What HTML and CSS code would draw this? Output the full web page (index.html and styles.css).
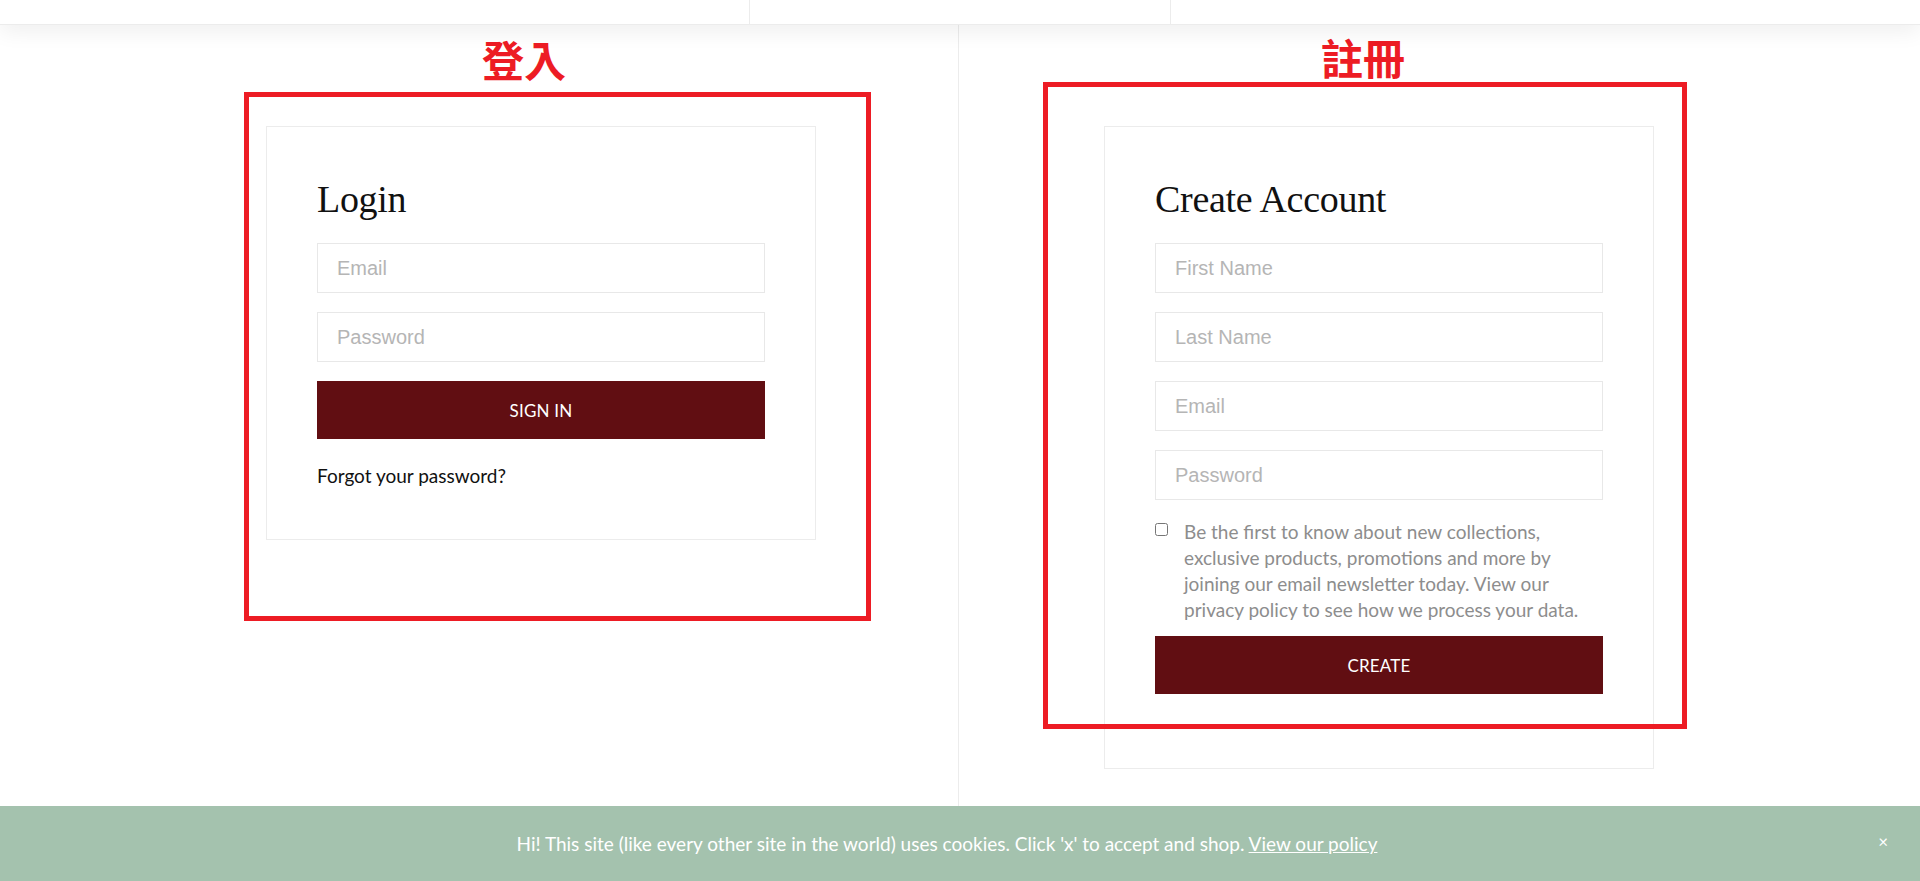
FILE: index.html
```html
<!DOCTYPE html>
<html lang="en">
<head>
    <meta charset="UTF-8">
    <meta name="viewport" content="width=device-width, initial-scale=1.0">
    <title>Account</title>
    <link rel="stylesheet" href="styles.css">
</head>
<body>
    <header class="topbar">
        <div class="topbar-cell topbar-left"></div>
        <div class="topbar-cell topbar-mid"></div>
        <div class="topbar-cell topbar-right"></div>
    </header>

    <main class="account">
        <section class="account-col col-login">
            <div class="card">
                <h1 class="card-title">Login</h1>
                <form class="form">
                    <input class="field" type="email" placeholder="Email">
                    <input class="field" type="password" placeholder="Password">
                    <button class="btn" type="button">SIGN IN</button>
                </form>
                <a class="forgot" href="#">Forgot your password?</a>
            </div>
        </section>
        <section class="account-col col-register">
            <div class="card">
                <h1 class="card-title">Create Account</h1>
                <form class="form">
                    <input class="field" type="text" placeholder="First Name">
                    <input class="field" type="text" placeholder="Last Name">
                    <input class="field" type="email" placeholder="Email">
                    <input class="field" type="password" placeholder="Password">
                    <label class="optin">
                        <input class="optin-box" type="checkbox">
                        <span>Be the first to know about new collections, exclusive products, promotions and more by joining our email newsletter today. View our privacy policy to see how we process your data.</span>
                    </label>
                    <button class="btn" type="button">CREATE</button>
                </form>
            </div>
        </section>
    </main>

    <!-- annotations drawn over the page -->
    <div class="mark mark-login"></div>
    <div class="mark mark-register"></div>
    <div class="mark-label label-login">登入</div>
    <div class="mark-label label-register">註冊</div>

    <div class="cookie-bar">
        <p class="cookie-text">Hi! This site (like every other site in the world) uses cookies. Click 'x' to accept and shop. <a href="#">View our policy</a></p>
        <span class="cookie-close">×</span>
    </div>
</body>
</html>
```

FILE: styles.css
```css
body { margin: 0; padding: 0; background: #fff; font-family: "Lato", "Noto Sans", sans-serif; color: #111; position: relative; }

/* top bar */
.topbar { display: flex; height: 25px; background: #fff; border-bottom: 1px solid #ececec; box-shadow: 0 6px 22px rgba(0,0,0,0.07); position: relative; z-index: 1; box-sizing: border-box; }
.topbar-cell { height: 100%; }
.topbar-left { width: 749px; border-right: 1px solid #ececec; }
.topbar-mid { width: 420px; border-right: 1px solid #ececec; }
.topbar-right { flex: 1; }

/* two columns */
.account { display: grid; grid-template-columns: 959px 1fr; min-height: calc(100vh - 25px); }
.account-col { display: flex; align-items: flex-start; padding-top: 101px; }
.col-login { justify-content: flex-end; padding-right: 142px; border-right: 1px solid #ececec; }
.col-register { justify-content: flex-start; padding-left: 145px; }

.card { width: 550px; box-sizing: border-box; border: 1px solid #ececec; padding: 50px; background: #fff; }
.card-title { margin: 3px 0 25px; font-family: "Liberation Serif", serif; font-weight: normal; font-size: 38px; line-height: 1; letter-spacing: -0.3px; color: #111; }

.form { margin: 0; }
.field { display: block; width: 100%; height: 50px; box-sizing: border-box; margin: 0 0 19px; padding: 0 19px; border: 1px solid #e8e8e8; font-family: "Liberation Sans", Arial, sans-serif; font-size: 20px; color: #333; background: #fff; outline: none; }
.field::placeholder { color: #b5b5b5; }

.btn { display: block; width: 100%; height: 58px; margin: 0 0 24px; border: 0; background: #610e12; color: #fff; font-family: "Lato", sans-serif; font-size: 17px; letter-spacing: 0.2px; cursor: pointer; }

.forgot { display: block; font-size: 19px; line-height: 26px; color: #111; text-decoration: none; }

.optin { display: flex; gap: 16px; margin: 0 0 13px; font-size: 19px; line-height: 26px; color: #8d8d8d; }
.optin-box { flex: none; width: 13px; height: 13px; margin: 4px 0 0; }

/* red annotation boxes */
.mark { position: absolute; border: 5px solid #ed1c24; box-sizing: border-box; pointer-events: none; }
.mark-login { left: 244px; top: 92px; width: 627px; height: 529px; }
.mark-register { left: 1043px; top: 82px; width: 644px; height: 647px; }
.mark-label { position: absolute; font-family: "Noto Sans CJK TC", "Noto Sans CJK SC", sans-serif; font-weight: bold; font-size: 42px; line-height: 42px; color: #ed1c24; }
.label-login { left: 482px; top: 38px; }
.label-register { left: 1321px; top: 36px; }

/* cookie notice */
.cookie-bar { position: fixed; left: 0; right: 0; bottom: 0; height: 75px; background: #a4c2ae; display: flex; align-items: center; justify-content: center; padding-right: 26px; box-sizing: border-box; }
.cookie-text { margin: 0; color: #fff; font-size: 19px; }
.cookie-text a { color: #fff; text-decoration: underline; }
.cookie-close { position: absolute; right: 32px; top: 28px; color: #fff; font-size: 17px; line-height: 16px; }
```
